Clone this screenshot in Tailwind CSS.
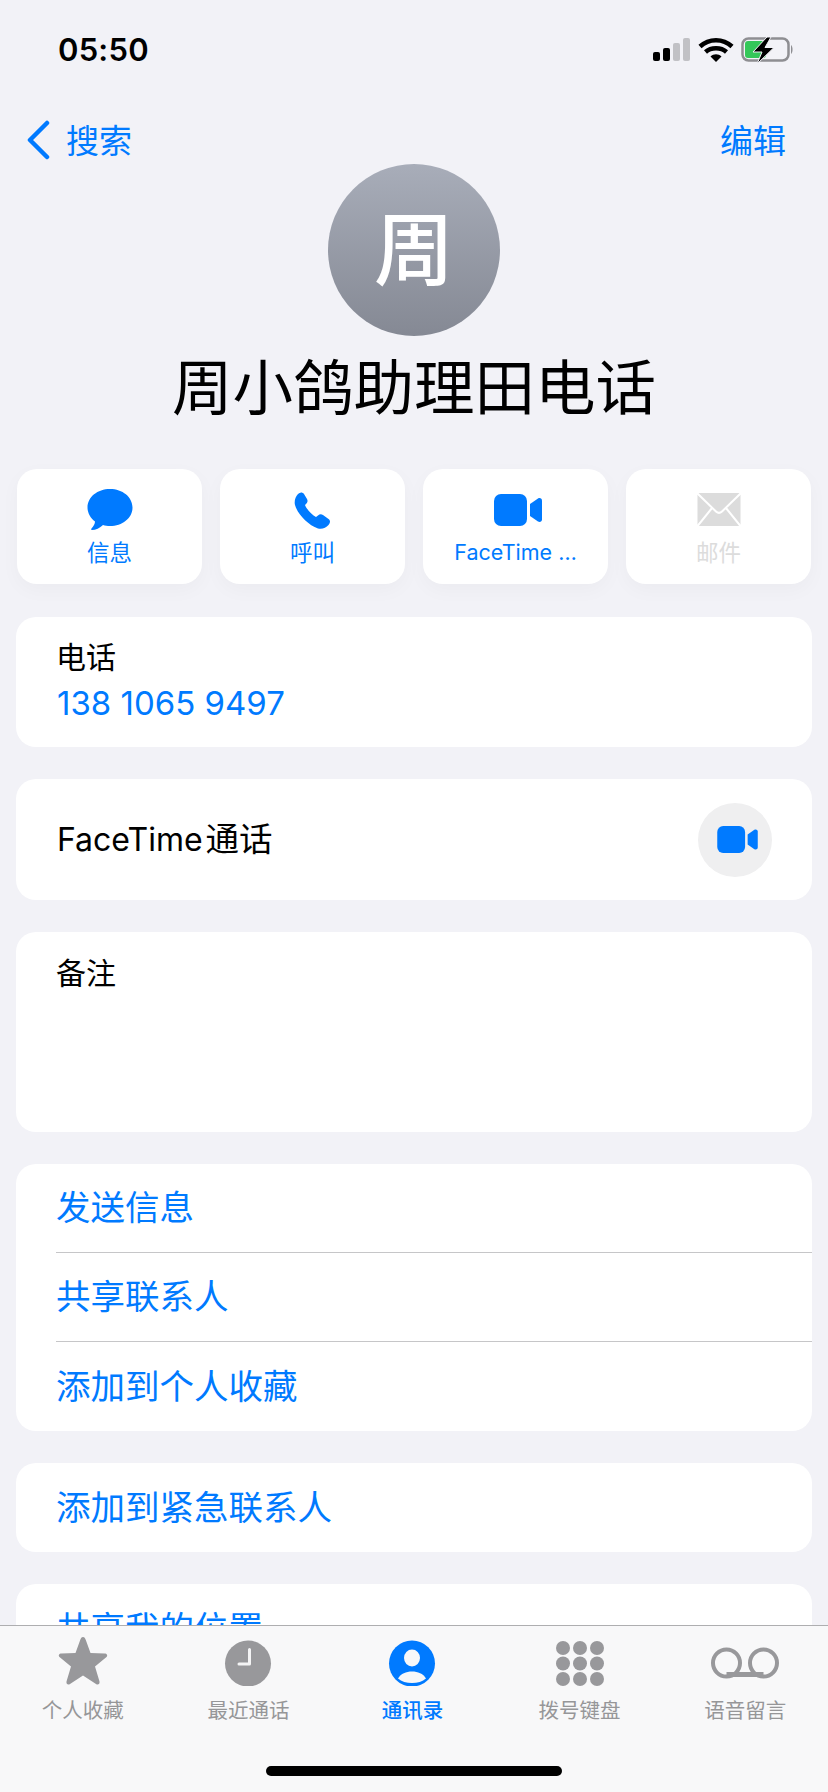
<!DOCTYPE html>
<html lang="zh-CN">

<head>
    <meta charset="UTF-8">
    <meta name="viewport" content="width=device-width, initial-scale=1.0">
    <script src="https://cdn.jsdelivr.net/npm/@tailwindcss/browser@4"></script>
    <title>周小鸽助理田电话</title>
</head>

<body class="bg-[#f2f2f7] font-['Inter','Noto_Sans_CJK_SC',sans-serif]">
    <div class="relative w-[828px] h-[1792px] overflow-hidden bg-[#f2f2f7] text-black">

        <!-- status bar -->
        <div class="h-[116px] pt-[32px] pl-[58px] pr-[34px] flex items-start justify-between">
            <span class="text-[31px] leading-[36px] font-semibold tracking-[0.2px]">05:50</span>
            <svg class="mt-[5px]" width="142" height="28" viewBox="0 0 142 28">
                <rect x="1" y="15" width="7" height="9" rx="2" fill="#000" />
                <rect x="11" y="11" width="7" height="13" rx="2" fill="#000" />
                <rect x="21" y="6" width="7" height="18" rx="2" fill="#c1c1c5" />
                <rect x="31" y="1" width="7" height="23" rx="2" fill="#c1c1c5" />
                <path d="M48 9.500 C57 1 71 1 80 9.500 M53.500 15 C59 10 69 10 74.500 15" fill="none" stroke="#000" stroke-width="4.5" />
                <path d="M58.500 19.500 C61.500 16.500 66.500 16.500 69.500 19.500 L64 25 Z" fill="#000" />
                <rect x="90.500" y="1.500" width="46" height="22" rx="6" fill="none" stroke="#8e8e92" stroke-width="2.5" />
                <path d="M139 8 C141 9 141 16 139 17 Z" fill="#8e8e92" />
                <rect x="93" y="4" width="21" height="17" rx="3" fill="#34c759" />
                <path d="M115 0 L101 15 H110 L105 27 L122 10.500 H113 L119 0 Z" fill="#000" stroke="#f2f2f7" stroke-width="1" />
            </svg>
        </div>

        <!-- nav -->
        <div class="h-[48px] pl-[26px] pr-[42px] flex items-center justify-between text-[#007aff] text-[33px] leading-[50px]">
            <div class="flex items-center gap-[16px]">
                <svg width="24" height="40" viewBox="0 0 24 40">
                    <path d="M21 3 L4 20 L21 37" fill="none" stroke="#007aff" stroke-width="4.5" stroke-linecap="round" stroke-linejoin="round" />
                </svg>
                <span class="pt-[2px]">搜索</span>
            </div>
            <span class="pt-[2px]">编辑</span>
        </div>

        <!-- avatar + name -->
        <div class="w-[172px] h-[172px] mx-auto rounded-full bg-gradient-to-b from-[#a8adb9] to-[#858994] flex items-center justify-center text-white text-[80px] leading-none font-medium">周</div>
        <h1 class="mt-[18px] text-center text-[60.5px] leading-[68px] font-normal">周小鸽助理田电话</h1>

        <!-- action buttons -->
        <div class="mt-[47px] px-[17px] grid grid-cols-4 gap-[18px]">
            <div class="h-[115px] rounded-[20px] bg-white shadow-[0_6px_20px_rgba(0,0,0,0.03)] flex flex-col items-center pt-[20px] text-[#007aff] text-[22.5px] leading-[28px]">
                <svg class="h-[42px]" width="46" height="42" viewBox="0 0 46 42">
                    <path d="M23 0 C35.500 0 45.500 8 45.500 18.500 C45.500 29 35.500 37 23 37 C20.500 37 18 36.700 16 36 C13 39 8.500 41 5 41 C4 41 3.800 40 4.500 39.400 C6.500 37.500 8 34.800 8 32.500 C3.500 29 0.500 24 0.500 18.500 C0.500 8 10.500 0 23 0 Z" fill="#007aff" />
                </svg>
                <span class="mt-[8px]">信息</span>
            </div>
            <div class="h-[115px] rounded-[20px] bg-white shadow-[0_6px_20px_rgba(0,0,0,0.03)] flex flex-col items-center pt-[20px] text-[#007aff] text-[22.5px] leading-[28px]">
                <svg class="h-[42px]" width="37" height="42" viewBox="0 0 37 42">
                    <path d="M4 5 C6 3 8.500 3 10 5 L13 10 C14 12 13.500 13.500 12 15 L11 16 C12.500 20 18 26 22 28 L24 26.500 C25.500 25 27.500 25 29 26 L34.500 30 C36.500 31.500 36.500 34 34.500 36 C32 39 28 40.500 24 39.500 C14 36 3.500 25 1 16 C0 12 1.500 7.500 4 5 Z" fill="#007aff" />
                </svg>
                <span class="mt-[8px]">呼叫</span>
            </div>
            <div class="h-[115px] rounded-[20px] bg-white shadow-[0_6px_20px_rgba(0,0,0,0.03)] flex flex-col items-center pt-[20px] text-[#007aff] text-[21.5px] leading-[28px]">
                <svg class="h-[42px] ml-[4px]" width="48" height="42" viewBox="0 0 48 42">
                    <rect x="0" y="5" width="33" height="32" rx="7" fill="#007aff" />
                    <path d="M36 15 L44 9.500 C46 8.500 48 9.500 48 11.500 L48 30.500 C48 32.500 46 33.500 44 32.500 L36 27 Z" fill="#007aff" />
                </svg>
                <span class="mt-[7px]">FaceTime …</span>
            </div>
            <div class="h-[115px] rounded-[20px] bg-white shadow-[0_6px_20px_rgba(0,0,0,0.03)] flex flex-col items-center pt-[20px] text-[#dcdcdc] text-[22.5px] leading-[28px]">
                <svg class="h-[42px]" width="44" height="42" viewBox="0 0 44 42">
                    <rect x="0.500" y="4" width="43" height="33" rx="2" fill="#dcdcdc" />
                    <path d="M0.500 4.500 L19 22.500 C20.800 24.200 23.200 24.200 25 22.500 L43.500 4.500 M0.500 37 L15 19 M43.500 37 L29 19" fill="none" stroke="#fff" stroke-width="2" />
                </svg>
                <span class="mt-[8px]">邮件</span>
            </div>
        </div>

        <!-- cards -->
        <div class="mt-[33px] mx-[16px] flex flex-col gap-[32px]">
            <div class="h-[130px] rounded-[20px] bg-white pl-[41px] pt-[19px]">
                <div class="-ml-[1px] text-[30px] leading-[42px]">电话</div>
                <div class="text-[#007aff] text-[33px] leading-[50px]">138 1065 9497</div>
            </div>

            <div class="h-[121px] rounded-[20px] bg-white pl-[41px] pr-[40px] flex items-center justify-between">
                <div class="flex items-center gap-[3px]">
                    <span class="text-[32px]">FaceTime</span>
                    <span class="text-[33.5px]">通话</span>
                </div>
                <div class="w-[74px] h-[74px] rounded-full bg-[#efeff0] flex items-center justify-center pl-[4px]">
                    <svg width="41" height="27" viewBox="0 0 48 32">
                        <rect x="0" y="0" width="33" height="32" rx="7" fill="#007aff" />
                        <path d="M36 10 L44 4.500 C46 3.500 48 4.500 48 6.500 L48 25.500 C48 27.500 46 28.500 44 27.500 L36 22 Z" fill="#007aff" />
                    </svg>
                </div>
            </div>

            <div class="h-[200px] rounded-[20px] bg-white pl-[40px] pt-[20px] text-[30px] leading-[42px]">备注</div>

            <div class="h-[267px] rounded-[20px] bg-white pl-[40px] text-[#007aff] text-[34.5px] flex flex-col">
                <div class="h-[89px] flex items-center border-b border-[#c6c6c8]">发送信息</div>
                <div class="h-[89px] flex items-center border-b border-[#c6c6c8]">共享联系人</div>
                <div class="h-[89px] flex items-center">添加到个人收藏</div>
            </div>

            <div class="h-[89px] rounded-[20px] bg-white pl-[40px] text-[#007aff] text-[34.5px] flex items-center">添加到紧急联系人</div>

            <div class="h-[89px] rounded-[20px] bg-white pl-[40px] text-[#007aff] text-[34.5px] flex items-center">共享我的位置</div>
        </div>

        <!-- tab bar -->
        <div class="absolute left-0 right-0 bottom-0 h-[167px] bg-[#f8f8f9] border-t border-[#aeaeb0]">
            <div class="grid grid-cols-5 text-[#969698] text-[20.5px] leading-[24px]">
                <div class="flex flex-col items-center pt-[10px]">
                    <svg width="52" height="50" viewBox="0 0 52 50">
                        <path d="M26 1 C27.500 1 28 2 28.800 4 L33.500 17 L47.500 17.500 C50 17.500 51 19.500 49.500 21 L38 30.500 L42.500 45.500 C43 48 41 49.300 39 48 L26 39.500 L13 48 C11 49.300 9 48 9.500 45.500 L14 30.500 L2.500 21 C1 19.500 2 17.500 4.500 17.500 L18.500 17 L23.200 4 C24 2 24.500 1 26 1 Z" fill="#98989b" />
                    </svg>
                    <span class="mt-[13px]">个人收藏</span>
                </div>
                <div class="flex flex-col items-center pt-[10px]">
                    <svg width="52" height="50" viewBox="0 0 52 50">
                        <circle cx="26" cy="27.500" r="23" fill="#98989b" />
                        <path d="M27.500 13.500 V28 H17" fill="none" stroke="#f4f4f5" stroke-width="3" stroke-linecap="round" stroke-linejoin="round" />
                    </svg>
                    <span class="mt-[13px]">最近通话</span>
                </div>
                <div class="flex flex-col items-center pt-[10px] pr-[3px] text-[#007aff] font-medium">
                    <svg width="52" height="50" viewBox="0 0 52 50">
                        <circle cx="26" cy="27.500" r="23" fill="#007aff" />
                        <ellipse cx="26" cy="22" rx="8" ry="8.500" fill="#f8f8f9" />
                        <path d="M12 42.500 C15 37.500 20 35.500 26 35.500 C32 35.500 37 37.500 40 42.500 C36.500 45.500 31.500 47 26 47 C20.500 47 15.500 45.500 12 42.500 Z" fill="#f8f8f9" />
                    </svg>
                    <span class="mt-[13px]">通讯录</span>
                </div>
                <div class="flex flex-col items-center pt-[10px]">
                    <svg width="52" height="50" viewBox="0 0 52 50">
                        <g fill="#98989b">
                            <circle cx="9" cy="12" r="7" /><circle cx="26" cy="12" r="7" /><circle cx="43" cy="12" r="7" />
                            <circle cx="9" cy="27.500" r="7" /><circle cx="26" cy="27.500" r="7" /><circle cx="43" cy="27.500" r="7" />
                            <circle cx="9" cy="43" r="7" /><circle cx="26" cy="43" r="7" /><circle cx="43" cy="43" r="7" />
                        </g>
                    </svg>
                    <span class="mt-[13px]">拨号键盘</span>
                </div>
                <div class="flex flex-col items-center pt-[10px]">
                    <svg width="70" height="50" viewBox="0 0 70 50">
                        <circle cx="16.500" cy="27" r="13.500" fill="none" stroke="#98989b" stroke-width="4" />
                        <circle cx="53.500" cy="27" r="13.500" fill="none" stroke="#98989b" stroke-width="4" />
                        <path d="M16.500 38.500 H53.500" stroke="#98989b" stroke-width="5" />
                    </svg>
                    <span class="mt-[13px]">语音留言</span>
                </div>
            </div>
            <div class="absolute left-[266px] bottom-[16px] w-[296px] h-[10px] rounded-full bg-black"></div>
        </div>
    </div>
</body>

</html>
